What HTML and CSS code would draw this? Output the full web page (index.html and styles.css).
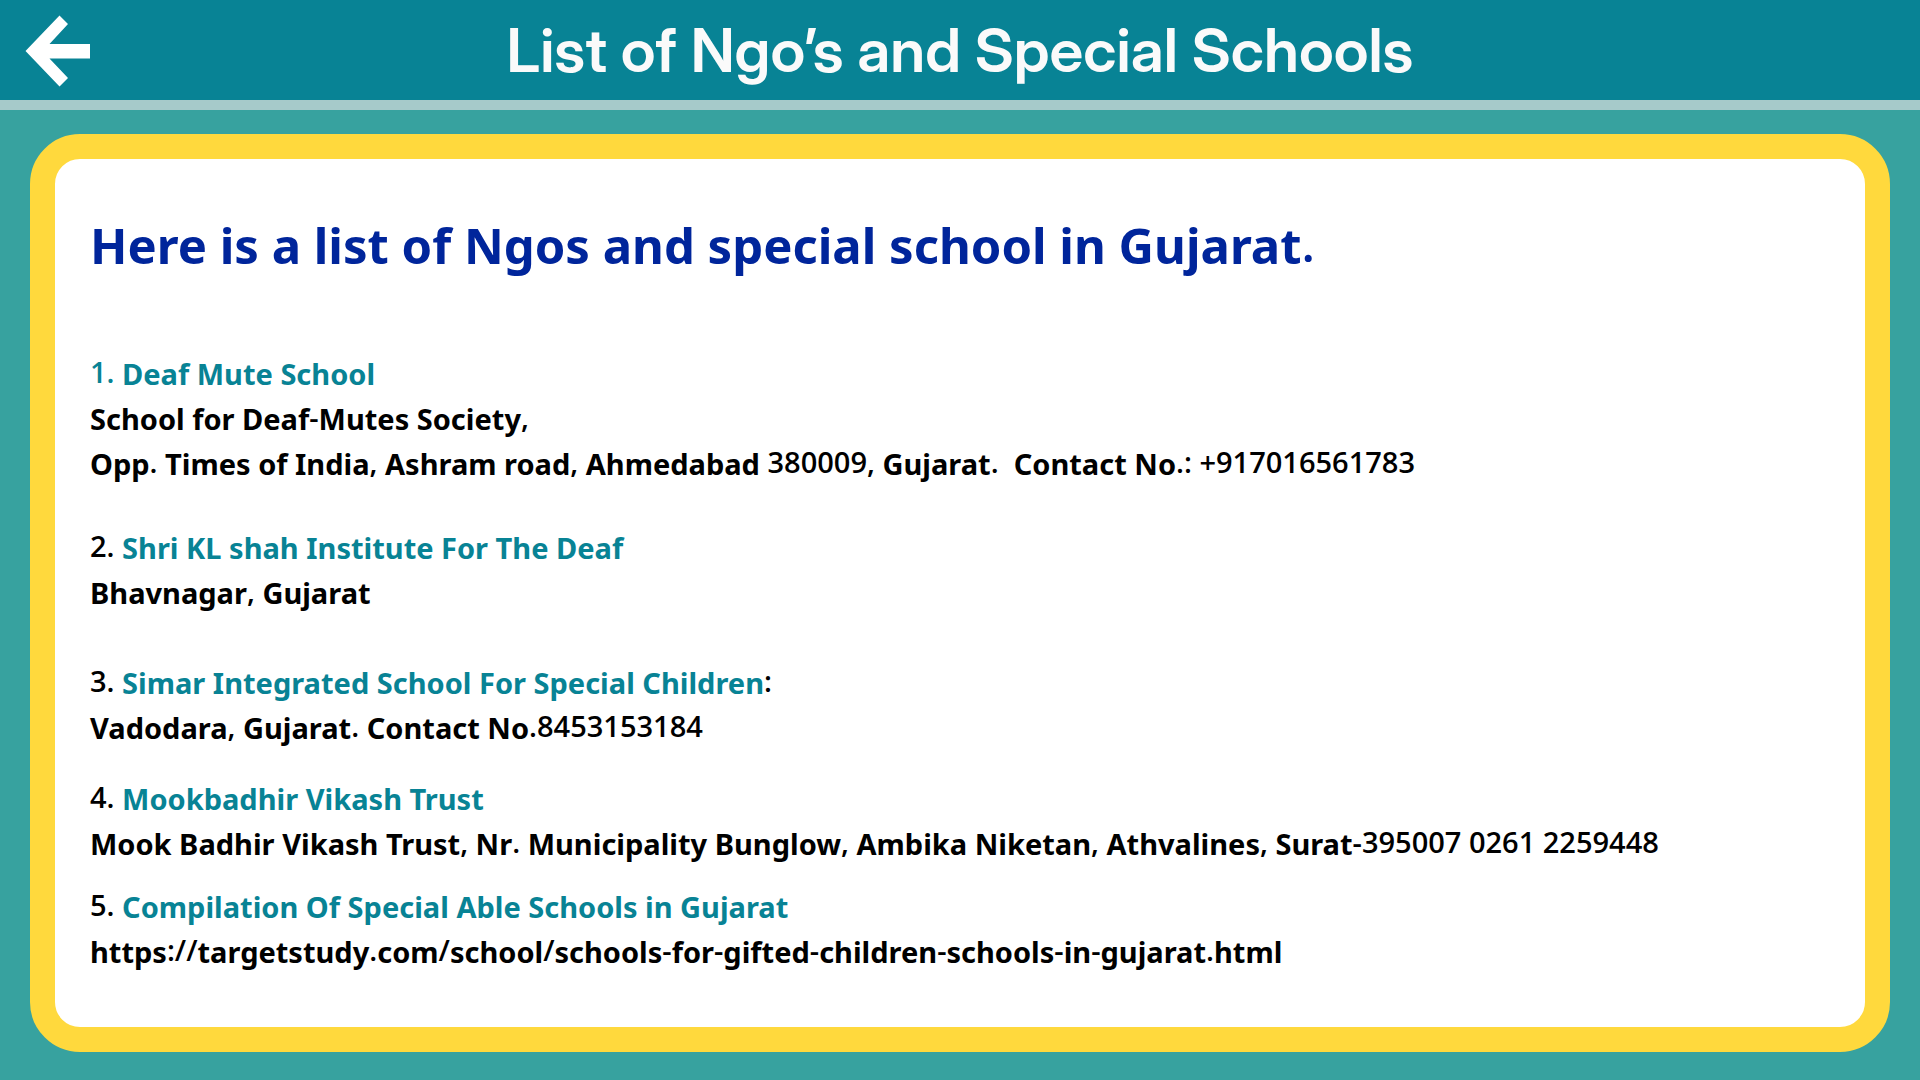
FILE: index.html
```html
<!DOCTYPE html>
<html lang="en">
<head>
<meta charset="utf-8">
<meta name="viewport" content="width=device-width, initial-scale=1">
<title>List of Ngo’s and Special Schools</title>
<link rel="stylesheet" href="styles.css">
</head>
<body>
<header class="topbar">
  <button class="back" type="button" aria-label="Back">
    <svg class="back-icon" viewBox="0 0 66 72" aria-hidden="true"><path d="M34.500 0.500L43 9L24.500 29H65V43.500H24.500L43 63L34.500 71.500L0.500 36Z" fill="#fff"/></svg>
  </button>
  <h1 class="title">List of Ngo’s and Special Schools</h1>
</header>
<main class="card">
  <h2 class="intro">Here is a list of Ngos and special school in Gujarat<span class="num">.</span></h2>
  <section class="entry">
    <h3 class="name"><span class="num">1.</span> Deaf Mute School</h3>
    <p class="line">School for Deaf<span class="num">-</span>Mutes Society<span class="num">,</span></p>
    <p class="line">Opp<span class="num">.</span> Times of India<span class="num">,</span> Ashram road<span class="num">,</span> Ahmedabad <span class="num">380009,</span> Gujarat<span class="num">.</span>&nbsp; Contact No<span class="num">.: +917016561783</span></p>
  </section>
  <section class="entry gap-large">
    <h3 class="name"><span class="num dark">2.</span> Shri KL shah Institute For The Deaf</h3>
    <p class="line">Bhavnagar<span class="num">,</span> Gujarat</p>
  </section>
  <section class="entry gap-xlarge">
    <h3 class="name"><span class="num dark">3.</span> Simar Integrated School For Special Children<span class="num dark">:</span></h3>
    <p class="line">Vadodara<span class="num">,</span> Gujarat<span class="num">.</span> Contact No<span class="num">.8453153184</span></p>
  </section>
  <section class="entry gap-medium">
    <h3 class="name"><span class="num dark">4.</span> Mookbadhir Vikash Trust</h3>
    <p class="line">Mook Badhir Vikash Trust<span class="num">,</span> Nr<span class="num">.</span> Municipality Bunglow<span class="num">,</span> Ambika Niketan<span class="num">,</span> Athvalines<span class="num">,</span> Surat<span class="num">-395007 0261 2259448</span></p>
  </section>
  <section class="entry gap-small">
    <h3 class="name"><span class="num dark">5.</span> Compilation Of Special Able Schools in Gujarat</h3>
    <p class="line"><a class="link" href="https://targetstudy.com/school/schools-for-gifted-children-schools-in-gujarat.html">https<span class="num">://</span>targetstudy<span class="num">.</span>com<span class="num">/</span>school<span class="num">/</span>schools<span class="num">-</span>for<span class="num">-</span>gifted<span class="num">-</span>children<span class="num">-</span>schools<span class="num">-</span>in<span class="num">-</span>gujarat<span class="num">.</span>html</a></p>
  </section>
</main>
</body>
</html>
```
FILE: styles.css
```css
* {
  box-sizing: border-box;
}

body {
  display: flex;
  flex-direction: column;
  min-height: 100vh;
  margin: 0;
  background: #37a29f;
  color: #000;
  font-family: "Noto Sans", sans-serif;
}

h1, h2, h3, p {
  margin: 0;
}

.topbar {
  display: grid;
  grid-template-columns: 92px 1fr 92px;
  align-items: center;
  min-height: 110px;
  border-bottom: 10px solid #a6caca;
  background: #088395;
}

.back {
  display: flex;
  padding: 2px 0 0 25px;
  border: 0;
  background: none;
  cursor: pointer;
}

.back-icon {
  width: 66px;
  height: 72px;
}

.title {
  color: #fafafa;
  font: 600 61px/72px "Inter Display", Inter, sans-serif;
  text-align: center;
}

.card {
  flex: 1;
  margin: 24px 30px 28px;
  padding: 52px 35px 40px;
  border: 25px solid #ffd93d;
  border-radius: 50px;
  background: #fff;
}

.intro {
  margin-bottom: 72px;
  color: #00259b;
  font-size: 49px;
  font-weight: 700;
  line-height: 68px;
}

.name,
.line {
  font-size: 29px;
  font-weight: 700;
  line-height: 45px;
}

.name {
  color: #088395;
}

.num {
  font-family: "Open Sans", "Noto Sans", sans-serif;
  font-weight: 600;
  line-height: 1;
  vertical-align: 2px;
}

.dark {
  color: #000;
}

.link {
  color: inherit;
  text-decoration: none;
}

.gap-small {
  margin-top: 18px;
}

.gap-medium {
  margin-top: 26px;
}

.gap-large {
  margin-top: 39px;
}

.gap-xlarge {
  margin-top: 45px;
}
```
